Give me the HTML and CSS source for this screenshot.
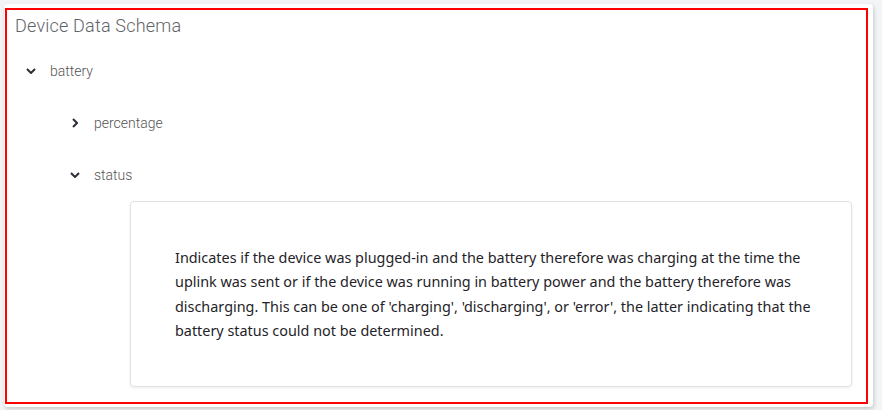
FILE: index.html
```html
<!DOCTYPE html>
<html lang="en">
<head>
    <meta charset="UTF-8">
    <title>Device Data Schema</title>
    <link rel="stylesheet" href="styles.css">
</head>
<body>
    <div class="card">
        <div class="frame">
            <h2 class="title">Device Data Schema</h2>
            <div class="node">
                <div class="row">
                    <span class="chevron"><svg width="10" height="6" viewBox="0 0 10 6"><path d="M1 1l4 4 4-4" fill="none" stroke="#2b2f36" stroke-width="2"/></svg></span>
                    <span class="label">battery</span>
                </div>
                <div class="children">
                    <div class="node">
                        <div class="row">
                            <span class="chevron"><svg width="6" height="10" viewBox="0 0 6 10"><path d="M1 1l4 4-4 4" fill="none" stroke="#2b2f36" stroke-width="2"/></svg></span>
                            <span class="label">percentage</span>
                        </div>
                    </div>
                    <div class="node">
                        <div class="row">
                            <span class="chevron"><svg width="10" height="6" viewBox="0 0 10 6"><path d="M1 1l4 4 4-4" fill="none" stroke="#2b2f36" stroke-width="2"/></svg></span>
                            <span class="label">status</span>
                        </div>
                        <div class="details">
                            <p>Indicates if the device was plugged-in and the battery therefore was charging at the time the uplink was sent or if the device was running in battery power and the battery therefore was discharging. This can be one of 'charging', 'discharging', or 'error', the latter indicating that the battery status could not be determined.</p>
                        </div>
                    </div>
                </div>
            </div>
        </div>
    </div>
</body>
</html>
```

FILE: styles.css
```css
body {
    margin: 0;
    background-color: #f3f4f6;
    font-family: Roboto, "Liberation Sans", sans-serif;
}
.card {
    margin: 4px 9px 4px 4px;
    padding: 4px 5px 3px 1px;
    background: #fff;
    border-radius: 4px;
    box-shadow: 1px 2px 4px rgba(0,0,0,0.18);
}
.frame {
    border: 2px solid #f00;
    padding-bottom: 15px;
}
.title {
    margin: 0;
    padding: 4px 8px 7px;
    font-size: 18px;
    line-height: 24px;
    font-weight: 300;
    color: #5f6368;
    letter-spacing: 0.2px;
}
.row {
    display: flex;
    align-items: center;
    height: 52px;
    padding-left: 18px;
}
.chevron {
    width: 12px;
    display: flex;
    justify-content: center;
    margin-right: 13px;
}
.label {
    font-size: 14px;
    font-weight: 300;
    color: #555;
}
.children {
    padding-left: 44px;
}
.details {
    margin: 0 14px 0 79px;
    border: 1px solid #e2e2e2;
    border-radius: 4px;
    box-shadow: 0 1px 3px rgba(0,0,0,0.08);
    padding: 44px 28px 43px 44px;
}
.details p {
    margin: 0;
    font-family: "Noto Sans", sans-serif;
    font-size: 14.4px;
    line-height: 24.3px;
    color: #1f2329;
}
```
